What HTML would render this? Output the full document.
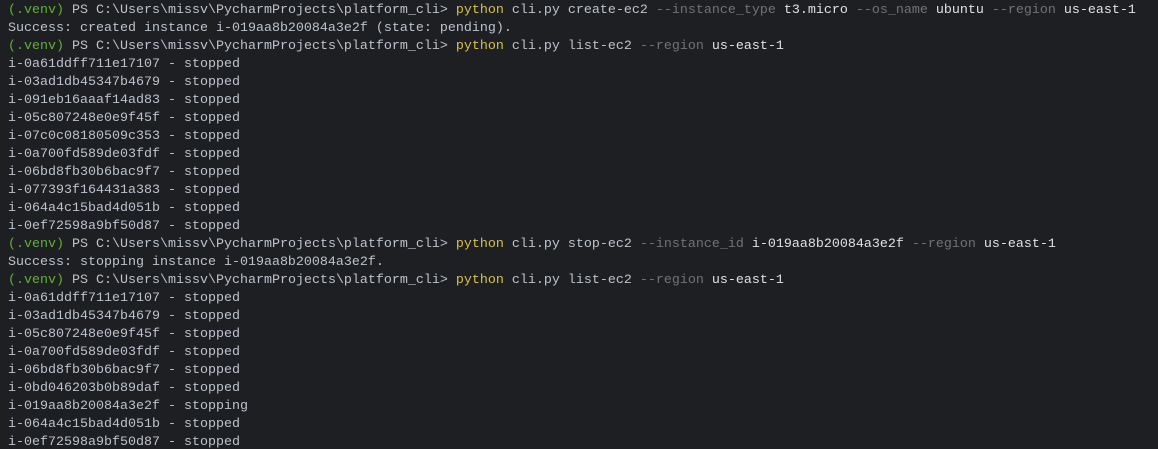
<!DOCTYPE html>
<html><head><meta charset="utf-8"><style>
html,body{margin:0;padding:0;background:#1e1f22;width:1158px;height:449px;overflow:hidden}
pre{margin:0;padding:2px 0 0 8px;font-family:"Liberation Mono",monospace;font-size:13.33px;line-height:18px;color:#bcc3cd;white-space:pre}
.g{color:#5fb236}.y{color:#d6c04a}.d{color:#6f737a}.w{color:#dfe1e5}
</style></head><body><pre><span class="g">(.venv)</span> PS C:\Users\missv\PycharmProjects\platform_cli&gt; <span class="y">python</span> cli.py create-ec2 <span class="d">--instance_type</span> <span class="w">t3.micro</span> <span class="d">--os_name</span> <span class="w">ubuntu</span> <span class="d">--region</span> <span class="w">us-east-1</span>
Success: created instance i-019aa8b20084a3e2f (state: pending).
<span class="g">(.venv)</span> PS C:\Users\missv\PycharmProjects\platform_cli&gt; <span class="y">python</span> cli.py list-ec2 <span class="d">--region</span> <span class="w">us-east-1</span>
i-0a61ddff711e17107 - stopped
i-03ad1db45347b4679 - stopped
i-091eb16aaaf14ad83 - stopped
i-05c807248e0e9f45f - stopped
i-07c0c08180509c353 - stopped
i-0a700fd589de03fdf - stopped
i-06bd8fb30b6bac9f7 - stopped
i-077393f164431a383 - stopped
i-064a4c15bad4d051b - stopped
i-0ef72598a9bf50d87 - stopped
<span class="g">(.venv)</span> PS C:\Users\missv\PycharmProjects\platform_cli&gt; <span class="y">python</span> cli.py stop-ec2 <span class="d">--instance_id</span> <span class="w">i-019aa8b20084a3e2f</span> <span class="d">--region</span> <span class="w">us-east-1</span>
Success: stopping instance i-019aa8b20084a3e2f.
<span class="g">(.venv)</span> PS C:\Users\missv\PycharmProjects\platform_cli&gt; <span class="y">python</span> cli.py list-ec2 <span class="d">--region</span> <span class="w">us-east-1</span>
i-0a61ddff711e17107 - stopped
i-03ad1db45347b4679 - stopped
i-05c807248e0e9f45f - stopped
i-0a700fd589de03fdf - stopped
i-06bd8fb30b6bac9f7 - stopped
i-0bd046203b0b89daf - stopped
i-019aa8b20084a3e2f - stopping
i-064a4c15bad4d051b - stopped
i-0ef72598a9bf50d87 - stopped</pre></body></html>
